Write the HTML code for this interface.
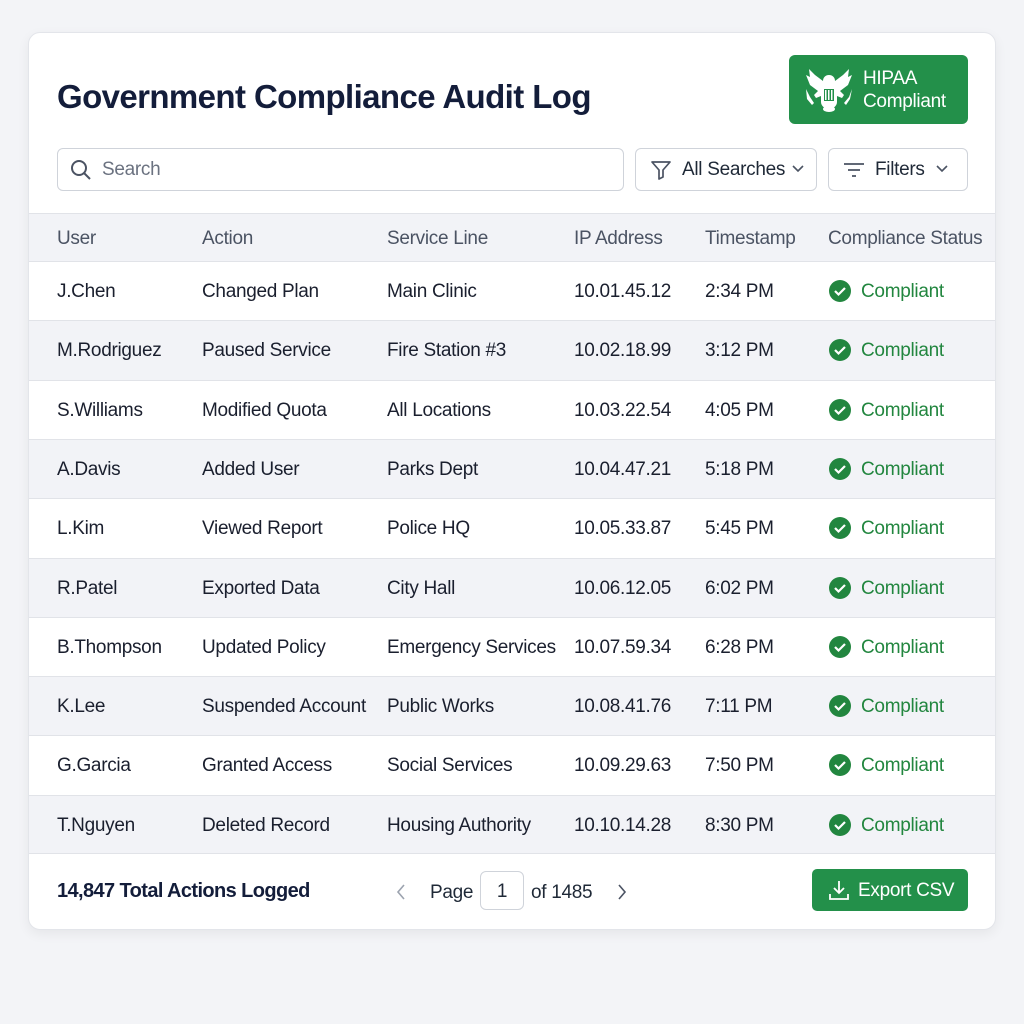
<!DOCTYPE html>
<html><head><style>
*{box-sizing:border-box;margin:0;padding:0}
body{width:1024px;height:1024px;background:#f3f4f7;font-family:"Liberation Sans",sans-serif;position:relative;overflow:hidden;letter-spacing:-0.3px}
.card{position:absolute;left:28px;top:32px;width:968px;height:898px;background:#fff;border:1px solid #e3e5ea;border-radius:12px;box-shadow:0 4px 12px rgba(0,0,0,.06);overflow:hidden}
h1{position:absolute;left:28px;top:44px;line-height:40px;font-size:33px;font-weight:700;color:#131d3a;letter-spacing:-0.6px}
.badge{position:absolute;left:760px;top:22px;width:179px;height:69px;background:#23904a;border-radius:6px;color:#fff;font-size:19px;line-height:23px;padding:12px 0 0 74px}
.badge svg{position:absolute;left:14px;top:12px}
.search{position:absolute;left:28px;top:115px;width:567px;height:43px;border:1px solid #cfd3da;border-radius:6px;font-size:19px;color:#6b7280;padding:10px 0 0 44px}
.search svg{position:absolute;left:12px;top:10px}
.dd{position:absolute;top:115px;height:43px;border:1px solid #cfd3da;border-radius:6px;font-size:19px;color:#1f2937;padding:10px 0 0 46px}
.dd svg{position:absolute}
.row{position:absolute;left:0;width:968px;height:59.3px;border-top:1px solid #e1e3e8;font-size:19px;color:#1a1f2e}
.row span{position:absolute;top:19px;white-space:nowrap}
.g{background:#f2f3f7}
.hd{color:#4b5363}
.ok{color:#22863f}
.ok svg{position:absolute;left:-33px;top:-1px}
.foot{position:absolute;top:820px;left:0;width:968px;height:78px;border-top:1px solid #e1e3e8}
</style></head><body>
<div class="card">
<h1>Government Compliance Audit Log</h1>
<div class="badge"><svg width="52" height="46" viewBox="0 0 52 46" fill="#fff"><path d="M26 8c4 0 6 3 6 6l8-6 6-6-1 8 4-2-4 10-8 6 4 4-2 3-5-2v6c0 4-4 7-8 7s-8-3-8-7v-6l-5 2-2-3 4-4-8-6L3 8l4 2L6 2l6 6 8 6c0-3 2-6 6-6z"/><ellipse cx="26" cy="42" rx="6" ry="3"/><path d="M3 22l4 8 4 6-2 2-5-6zM49 22l-3 8-5 6 2 2 4-6z"/><rect x="21" y="22" width="10" height="12" fill="#23904a"/><path d="M22 23h1.5v10H22zM25 23h1.5v10H25zM28 23h1.5v10H28z"/></svg>HIPAA<br>Compliant</div>
<div class="search"><svg width="22" height="22" viewBox="0 0 22 22" fill="none" stroke="#4b5363" stroke-width="2"><circle cx="9" cy="9" r="7"/><path d="M14 14l6 6"/></svg>Search</div>
<div class="dd" style="left:606px;width:182px"><svg style="left:14px;top:10px" width="22" height="22" viewBox="0 0 22 22" fill="none" stroke="#4b5363" stroke-width="1.7" stroke-linejoin="round"><path d="M2 3h18l-7 8v7l-4 2v-9z"/></svg>All Searches<svg style="left:156px;top:16px" width="12" height="8" viewBox="0 0 12 8" fill="none" stroke="#4b5363" stroke-width="1.6"><path d="M1 1l5 5 5-5"/></svg></div>
<div class="dd" style="left:799px;width:140px"><svg style="left:14px;top:12px" width="22" height="18" viewBox="0 0 22 18" fill="none" stroke="#4b5363" stroke-width="1.7"><path d="M1 3h20M5 9h12M9 15h4"/></svg>Filters<svg style="left:107px;top:16px" width="12" height="8" viewBox="0 0 12 8" fill="none" stroke="#4b5363" stroke-width="1.6"><path d="M1 1l5 5 5-5"/></svg></div>

<div class="row g hd" style="top:180px;height:48px"><span style="left:28px;top:14px">User</span><span style="left:173px;top:14px">Action</span><span style="left:358px;top:14px">Service Line</span><span style="left:545px;top:14px">IP Address</span><span style="left:676px;top:14px">Timestamp</span><span style="left:799px;top:14px">Compliance Status</span></div>
<div id="rows"></div>

<div class="foot">
<div style="position:absolute;left:28px;top:26px;font-size:20px;font-weight:700;color:#131d3a;letter-spacing:-0.6px">14,847 Total Actions Logged</div>
<svg style="position:absolute;left:367px;top:30px" width="10" height="16" viewBox="0 0 10 16" fill="none" stroke="#9ca3af" stroke-width="1.6"><path d="M8 1L2 8l6 7"/></svg>
<div style="position:absolute;left:401px;top:28px;font-size:19px;color:#1f2937">Page</div>
<div style="position:absolute;left:451px;top:17px;width:44px;height:39px;border:1px solid #cfd3da;border-radius:6px;font-size:19px;text-align:center;padding-top:9px;color:#1f2937">1</div>
<div style="position:absolute;left:502px;top:28px;font-size:19px;color:#1f2937">of 1485</div>
<svg style="position:absolute;left:588px;top:30px" width="10" height="16" viewBox="0 0 10 16" fill="none" stroke="#4b5363" stroke-width="1.6"><path d="M2 1l6 7-6 7"/></svg>
<div style="position:absolute;left:783px;top:15px;width:156px;height:42px;background:#23904a;border-radius:5px;color:#fff;font-size:19px;padding:11px 0 0 46px">Export CSV<svg style="position:absolute;left:16px;top:10px" width="22" height="22" viewBox="0 0 22 22" fill="none" stroke="#fff" stroke-width="1.8"><path d="M11 2v12M6 9l5 5 5-5M2 15v5h18v-5"/></svg></div>
</div>
</div>
<script>
var d=[["J.Chen","Changed Plan","Main Clinic","10.01.45.12","2:34 PM"],["M.Rodriguez","Paused Service","Fire Station #3","10.02.18.99","3:12 PM"],["S.Williams","Modified Quota","All Locations","10.03.22.54","4:05 PM"],["A.Davis","Added User","Parks Dept","10.04.47.21","5:18 PM"],["L.Kim","Viewed Report","Police HQ","10.05.33.87","5:45 PM"],["R.Patel","Exported Data","City Hall","10.06.12.05","6:02 PM"],["B.Thompson","Updated Policy","Emergency Services","10.07.59.34","6:28 PM"],["K.Lee","Suspended Account","Public Works","10.08.41.76","7:11 PM"],["G.Garcia","Granted Access","Social Services","10.09.29.63","7:50 PM"],["T.Nguyen","Deleted Record","Housing Authority","10.10.14.28","8:30 PM"]];
var x=[28,173,358,545,676],h="";
d.forEach(function(r,i){h+='<div class="row'+(i%2?' g':'')+'" style="top:'+(228+i*59.3)+'px">';r.forEach(function(c,j){h+='<span style="left:'+x[j]+'px">'+c+'</span>'});h+='<span class="ok" style="left:832px"><svg width="24" height="24" viewBox="0 0 24 24"><circle cx="12" cy="11" r="11" fill="#22863f"/><path d="M7 11l3.5 3.5L17 8" fill="none" stroke="#fff" stroke-width="2.2"/></svg>Compliant</span></div>'});
document.getElementById("rows").innerHTML=h;
</script>
</body></html>
